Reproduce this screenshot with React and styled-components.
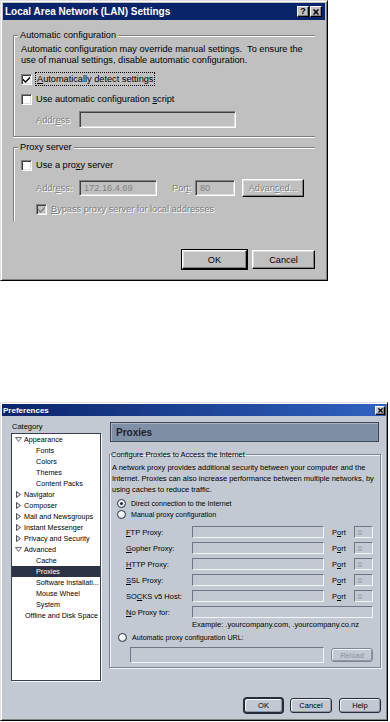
import React from 'react';
import styled, { createGlobalStyle, css } from 'styled-components';

const Global = createGlobalStyle`
  html, body { margin: 0; padding: 0; background: #ffffff; }
  body { font-family: "Liberation Sans", Arial, sans-serif; }
  #root { width: 390px; height: 722px; }
`;

const Page = styled.div`
  width: 390px;
  height: 722px;
  overflow: hidden;
  display: flex;
  flex-direction: column;
  background: #ffffff;
`;

/* ---------- Win classic LAN dialog ---------- */

const LanWindow = styled.div`
  width: 328px;
  height: 281px;
  box-sizing: border-box;
  background: #c0c0c0;
  border: 1px solid;
  border-color: #dfdfdf #000 #000 #dfdfdf;
  box-shadow: inset 1px 1px 0 #fff, inset -1px -1px 0 #808080;
  padding: 2px;
  display: flex;
  flex-direction: column;
  font-size: 9.2px;
  color: #000;
`;

const TitleBar = styled.div`
  height: 17px;
  flex: none;
  display: flex;
  align-items: center;
  justify-content: space-between;
  padding: 0 3px 0 2px;
  background: ${p => p.$gradient ? 'linear-gradient(90deg, #0a246a 0%, #2f62c0 100%)' : '#0a246a'};
  color: #fff;
  font-weight: bold;
  font-size: 10px;
  ${p => p.$small && css`
    height: 12px;
    font-size: 8px;
    padding: 0 1px 0 1px;
  `}
`;

const TitleButtons = styled.div`
  display: flex;
  gap: 1px;
`;

const TitleBtn = styled.span`
  width: 12px;
  height: 11px;
  box-sizing: border-box;
  background: ${p => p.$bg || '#c0c0c0'};
  border: 1px solid;
  border-color: #fff #000 #000 #fff;
  box-shadow: inset -1px -1px 0 #808080;
  display: flex;
  align-items: center;
  justify-content: center;
  color: #000;
  font-size: 9px;
  font-weight: bold;
  line-height: 1;
  ${p => p.$small && css`
    width: 10px;
    height: 9px;
  `}
`;

const LanBody = styled.div`
  flex: 1;
  display: flex;
  flex-direction: column;
  padding: 10px 10px 9px 10px;
`;

const Group = styled.fieldset`
  margin: 0;
  min-width: 0;
  padding: 3px 7px 8px 7px;
  border: 1px solid #808080;
  border-right: none;
  box-shadow: inset 1px 1px 0 #fff, 0 1px 0 #fff;
  display: flex;
  flex-direction: column;
  ${p => p.$open && css`
    border-bottom: none;
    box-shadow: inset 1px 1px 0 #fff;
    padding-bottom: 5px;
  `}
  ${p => p.$gap && css`margin-top: ${p.$gap}px;`}
`;

const Legend = styled.legend`
  padding: 0 2px;
  margin-left: -3px;
  line-height: 11px;
  background: #c0c0c0;
`;

const Para = styled.p`
  margin: 0;
  line-height: 11px;
  white-space: nowrap;
`;

const CheckRow = styled.div`
  display: flex;
  align-items: center;
  height: 14px;
  gap: 4px;
  margin-top: ${p => p.$mt || 0}px;
  padding-left: ${p => p.$indent || 0}px;
  color: ${p => p.$disabled ? '#808080' : '#000'};
  text-shadow: ${p => p.$disabled ? '1px 1px 0 #fff' : 'none'};
`;

const CheckBox = styled.span`
  width: 11px;
  height: 11px;
  flex: none;
  box-sizing: border-box;
  background: ${p => p.$disabled ? '#c0c0c0' : '#fff'};
  border: 1px solid;
  border-color: #808080 #fff #fff #808080;
  box-shadow: inset 1px 1px 0 #404040, inset -1px -1px 0 #dfdfdf;
  display: flex;
  align-items: center;
  justify-content: center;
`;

const Focus = styled.span`
  outline: 1px dotted #000;
  outline-offset: 0px;
  padding: 0 1px;
  line-height: 12px;
`;

const Key = styled.u`
  text-decoration: underline;
  text-underline-offset: 1px;
`;

const FieldRow = styled.div`
  display: flex;
  align-items: center;
  margin-top: ${p => p.$mt || 0}px;
  padding-left: ${p => p.$indent || 0}px;
`;

const DisabledLabel = styled.span`
  color: #808080;
  text-shadow: 1px 1px 0 #fff;
  width: ${p => p.$w}px;
  margin-left: ${p => p.$ml || 0}px;
  flex: none;
`;

const Field = styled.div`
  width: ${p => p.$w}px;
  height: ${p => p.$h || 16}px;
  box-sizing: border-box;
  flex: none;
  background: #c0c0c0;
  border: 1px solid;
  border-color: #808080 #fff #fff #808080;
  box-shadow: inset 1px 1px 0 #404040, inset -1px -1px 0 #dfdfdf;
  color: #808080;
  padding: 0 4px;
  display: flex;
  align-items: center;
  margin-left: ${p => p.$ml || 0}px;
`;

const WinButton = styled.div`
  width: ${p => p.$w}px;
  height: ${p => p.$h || 19}px;
  box-sizing: border-box;
  flex: none;
  background: #c0c0c0;
  border: 1px solid;
  border-color: #fff #000 #000 #fff;
  box-shadow: inset -1px -1px 0 #808080, inset 1px 1px 0 #dfdfdf;
  display: flex;
  align-items: center;
  justify-content: center;
  margin-left: ${p => p.$ml || 0}px;
  color: ${p => p.$disabled ? '#808080' : '#000'};
  text-shadow: ${p => p.$disabled ? '1px 1px 0 #fff' : 'none'};
  ${p => p.$default && css`
    outline: 1px solid #000;
  `}
`;

const ButtonRow = styled.div`
  margin-top: auto;
  display: flex;
  justify-content: flex-end;
  gap: 5px;
`;

const CheckMark = ({ color = '#000' }) => (
  <svg width="7" height="7" viewBox="0 0 7 7">
    <path d="M0 2.5 L2.5 5 L7 0.5 L7 2.5 L2.5 7 L0 4.5 Z" fill={color} />
  </svg>
);

const CloseGlyph = ({ size = 6 }) => (
  <svg width={size} height={size} viewBox="0 0 6 6">
    <path d="M0.5 0.5 L5.5 5.5 M5.5 0.5 L0.5 5.5" stroke="#000" strokeWidth="1.5" />
  </svg>
);

const LanDialog = () => (
  <LanWindow>
    <TitleBar>
      <span>Local Area Network (LAN) Settings</span>
      <TitleButtons>
        <TitleBtn>?</TitleBtn>
        <TitleBtn><CloseGlyph /></TitleBtn>
      </TitleButtons>
    </TitleBar>
    <LanBody>
      <Group>
        <Legend>Automatic configuration</Legend>
        <Para>
          Automatic configuration may override manual settings.&nbsp; To ensure the<br />
          use of manual settings, disable automatic configuration.
        </Para>
        <CheckRow $mt={6}>
          <CheckBox><CheckMark /></CheckBox>
          <Focus><Key>A</Key>utomatically detect settings</Focus>
        </CheckRow>
        <CheckRow $mt={6}>
          <CheckBox />
          <span>Use automatic configuration <Key>s</Key>cript</span>
        </CheckRow>
        <FieldRow $mt={5} $indent={15}>
          <DisabledLabel $w={43}>Addr<Key>e</Key>ss</DisabledLabel>
          <Field $w={157} $h={17} />
        </FieldRow>
      </Group>
      <Group $open $gap={5}>
        <Legend>Proxy server</Legend>
        <CheckRow $mt={2}>
          <CheckBox />
          <span>Use a pro<Key>x</Key>y server</span>
        </CheckRow>
        <FieldRow $mt={7} $indent={15}>
          <DisabledLabel $w={43}>Addr<Key>e</Key>ss:</DisabledLabel>
          <Field $w={78}>172.16.4.69</Field>
          <DisabledLabel $w={23} $ml={15}>Por<Key>t</Key>:</DisabledLabel>
          <Field $w={40}>80</Field>
          <WinButton $w={62} $h={18} $ml={7} $disabled>Advan<Key>c</Key>ed...</WinButton>
        </FieldRow>
        <CheckRow $mt={5} $indent={15} $disabled>
          <CheckBox $disabled><CheckMark color="#808080" /></CheckBox>
          <span><Key>B</Key>ypass proxy server for local addresses</span>
        </CheckRow>
      </Group>
      <ButtonRow>
        <WinButton $w={65} $h={19} $default>OK</WinButton>
        <WinButton $w={63} $h={19}>Cancel</WinButton>
      </ButtonRow>
    </LanBody>
  </LanWindow>
);

/* ---------- Mozilla Preferences dialog ---------- */

const PREF_BG = '#c3c9d2';

const PrefWindow = styled.div`
  margin-top: 121px;
  width: 388px;
  height: 319px;
  box-sizing: border-box;
  background: ${PREF_BG};
  border: 1px solid;
  border-color: #dfdfdf #000 #000 #dfdfdf;
  box-shadow: inset 1px 1px 0 #fff, inset -1px -1px 0 #808080;
  padding: 1px;
  display: flex;
  flex-direction: column;
  font-size: 7.5px;
  color: #000;
`;

const PrefBody = styled.div`
  display: grid;
  grid-template-columns: 90px 272px;
  column-gap: 8px;
  padding: 5px 0 0 9px;
`;

const Column = styled.div`
  display: flex;
  flex-direction: column;
`;

const CategoryLabel = styled.div`
  line-height: 11px;
  padding-left: 1px;
`;

const Tree = styled.div`
  margin-top: 1px;
  height: 248px;
  box-sizing: border-box;
  background: #fff;
  border: 1px solid #39404c;
  box-shadow: 1px 1px 0 #f4f6f8;
  display: flex;
  flex-direction: column;
  font-size: 7.2px;
`;

const TreeRow = styled.div`
  height: 11px;
  line-height: 11px;
  display: flex;
  align-items: center;
  white-space: nowrap;
  overflow: hidden;
  padding-left: ${p => p.$pad}px;
  gap: 2px;
  ${p => p.$selected && css`
    background: #2b3345;
    color: #fff;
  `}
`;

const Twisty = ({ open }) => (
  <svg width="7" height="7" viewBox="0 0 7 7">
    {open
      ? <path d="M0.5 1.5 L6.5 1.5 L3.5 5.5 Z" fill="#eef0f3" stroke="#4a505a" strokeWidth="0.8" />
      : <path d="M1.5 0.5 L5.5 3.5 L1.5 6.5 Z" fill="#dfe2e6" stroke="#3a3f48" strokeWidth="0.9" />}
  </svg>
);

const PanelHeader = styled.div`
  margin: 1px 2px 0 1px;
  height: 20px;
  box-sizing: border-box;
  background: #7f8fa5;
  border: 1px solid #3e4656;
  box-shadow: inset 1px 1px 0 #a9b5c4;
  display: flex;
  align-items: center;
  padding-left: 5px;
  font-size: 10px;
  font-weight: bold;
  color: #1c2230;
`;

const PGroup = styled.fieldset`
  margin: 7px 0 0 0;
  min-width: 0;
  padding: 2px 7px 4px 2px;
  border: 1px solid #7c8594;
  box-shadow: inset 1px 1px 0 #f0f2f5, 1px 1px 0 #f0f2f5;
  display: flex;
  flex-direction: column;
`;

const PLegend = styled.legend`
  padding: 0 1px;
  margin-left: -2px;
  line-height: 11px;
`;

const RadioRow = styled.div`
  display: flex;
  align-items: center;
  height: 11px;
  gap: 5px;
  padding-left: ${p => p.$indent || 5}px;
  margin-top: ${p => p.$mt || 0}px;
  font-size: 7.1px;
`;

const Radio = styled.span`
  width: 9px;
  height: 9px;
  box-sizing: border-box;
  border-radius: 50%;
  border: 1px solid #2e3440;
  background: radial-gradient(circle at 35% 35%, #ffffff 0%, #eef1f4 55%, #aab3bf 100%);
  display: flex;
  align-items: center;
  justify-content: center;
  flex: none;
  &::after {
    content: '';
    width: 3px;
    height: 3px;
    border-radius: 50%;
    background: ${p => p.$checked ? '#1d2330' : 'transparent'};
  }
`;

const ProxyRows = styled.div`
  margin-top: 6px;
  padding-left: 14px;
  display: flex;
  flex-direction: column;
  gap: 4px;
`;

const ProxyRow = styled.div`
  display: grid;
  grid-template-columns: ${p => p.$wide ? '66px 181px' : '66px 132px 8px 22px 19px'};
  align-items: center;
  height: 12px;
`;

const PLabel = styled.span`
  white-space: nowrap;
`;

const PField = styled.div`
  height: ${p => p.$h || 12}px;
  width: ${p => p.$w ? `${p.$w}px` : 'auto'};
  box-sizing: border-box;
  border: 1px solid;
  border-color: #6e7786 #f2f4f7 #f2f4f7 #6e7786;
  background: ${PREF_BG};
  color: #8a919c;
  display: flex;
  align-items: center;
  padding-left: 3px;
`;

const Example = styled.div`
  margin-top: 1px;
  padding-left: 80px;
  line-height: 11px;
`;

const UrlRow = styled.div`
  margin-top: 4px;
  padding-left: 18px;
  display: flex;
  align-items: center;
  gap: 7px;
`;

const MozButton = styled.div`
  width: ${p => p.$w}px;
  height: ${p => p.$h || 15}px;
  box-sizing: border-box;
  border: 1px solid ${p => p.$disabled ? '#7f8896' : '#262c36'};
  border-radius: 3px;
  background: ${PREF_BG};
  box-shadow: inset 1px 1px 0 #f2f4f7, inset -1px -1px 0 #8e97a4;
  display: flex;
  align-items: center;
  justify-content: center;
  color: ${p => p.$disabled ? '#8a919c' : '#000'};
  ${p => p.$default && css`
    box-shadow: 0 0 0 1px #262c36, inset 1px 1px 0 #f2f4f7, inset -1px -1px 0 #8e97a4;
  `}
`;

const PrefFooter = styled.div`
  margin-top: auto;
  display: flex;
  justify-content: flex-end;
  gap: 7px;
  padding: 0 5px 6px 0;
`;

const tree = [
  { label: 'Appearance', open: true },
  { label: 'Fonts', child: true },
  { label: 'Colors', child: true },
  { label: 'Themes', child: true },
  { label: 'Content Packs', child: true },
  { label: 'Navigator', open: false },
  { label: 'Composer', open: false },
  { label: 'Mail and Newsgroups', open: false },
  { label: 'Instant Messenger', open: false },
  { label: 'Privacy and Security', open: false },
  { label: 'Advanced', open: true },
  { label: 'Cache', child: true },
  { label: 'Proxies', child: true, selected: true },
  { label: 'Software Installati...', child: true },
  { label: 'Mouse Wheel', child: true },
  { label: 'System', child: true },
  { label: 'Offline and Disk Space', leaf: true },
];

const proxies = [
  <><Key>F</Key>TP Proxy:</>,
  <><Key>G</Key>opher Proxy:</>,
  <><Key>H</Key>TTP Proxy:</>,
  <><Key>S</Key>SL Proxy:</>,
  <>SO<Key>C</Key>KS v5 Host:</>,
];

const PrefDialog = () => (
  <PrefWindow>
    <TitleBar $gradient $small>
      <span>Preferences</span>
      <TitleBtn $small $bg={PREF_BG}><CloseGlyph size={5} /></TitleBtn>
    </TitleBar>
    <PrefBody>
      <Column>
        <CategoryLabel>Category</CategoryLabel>
        <Tree>
          {tree.map(t => (
            <TreeRow
              key={t.label}
              $pad={t.child ? 24 : t.leaf ? 13 : 3}
              $selected={t.selected}
            >
              {!t.child && !t.leaf && <Twisty open={t.open} />}
              <span>{t.label}</span>
            </TreeRow>
          ))}
        </Tree>
      </Column>
      <Column>
        <PanelHeader>Proxies</PanelHeader>
        <PGroup>
          <PLegend>Configure Proxies to Access the Internet</PLegend>
          <Para>
            A network proxy provides additional security between your computer and the<br />
            Internet. Proxies can also increase performance between multiple networks, by<br />
            using caches to reduce traffic.
          </Para>
          <RadioRow $mt={3}>
            <Radio $checked />
            <span>Direct connection to the Internet</span>
          </RadioRow>
          <RadioRow>
            <Radio />
            <span>Manual proxy configuration</span>
          </RadioRow>
          <ProxyRows>
            {proxies.map((label, i) => (
              <ProxyRow key={i}>
                <PLabel>{label}</PLabel>
                <PField />
                <span />
                <PLabel>P<Key>o</Key>rt</PLabel>
                <PField>0</PField>
              </ProxyRow>
            ))}
            <ProxyRow $wide>
              <PLabel><Key>N</Key>o Proxy for:</PLabel>
              <PField />
            </ProxyRow>
          </ProxyRows>
          <Example>Example: .yourcompany.com, .yourcompany.co.nz</Example>
          <RadioRow $mt={2} $indent={6}>
            <Radio />
            <span>Automatic proxy configuration URL:</span>
          </RadioRow>
          <UrlRow>
            <PField $w={195} $h={16} />
            <MozButton $w={42} $h={14} $disabled>Reload</MozButton>
          </UrlRow>
        </PGroup>
      </Column>
    </PrefBody>
    <PrefFooter>
      <MozButton $w={39} $default>OK</MozButton>
      <MozButton $w={42}>Cancel</MozButton>
      <MozButton $w={42}>Help</MozButton>
    </PrefFooter>
  </PrefWindow>
);

export default function App() {
  return (
    <>
      <Global />
      <Page>
        <LanDialog />
        <PrefDialog />
      </Page>
    </>
  );
}
